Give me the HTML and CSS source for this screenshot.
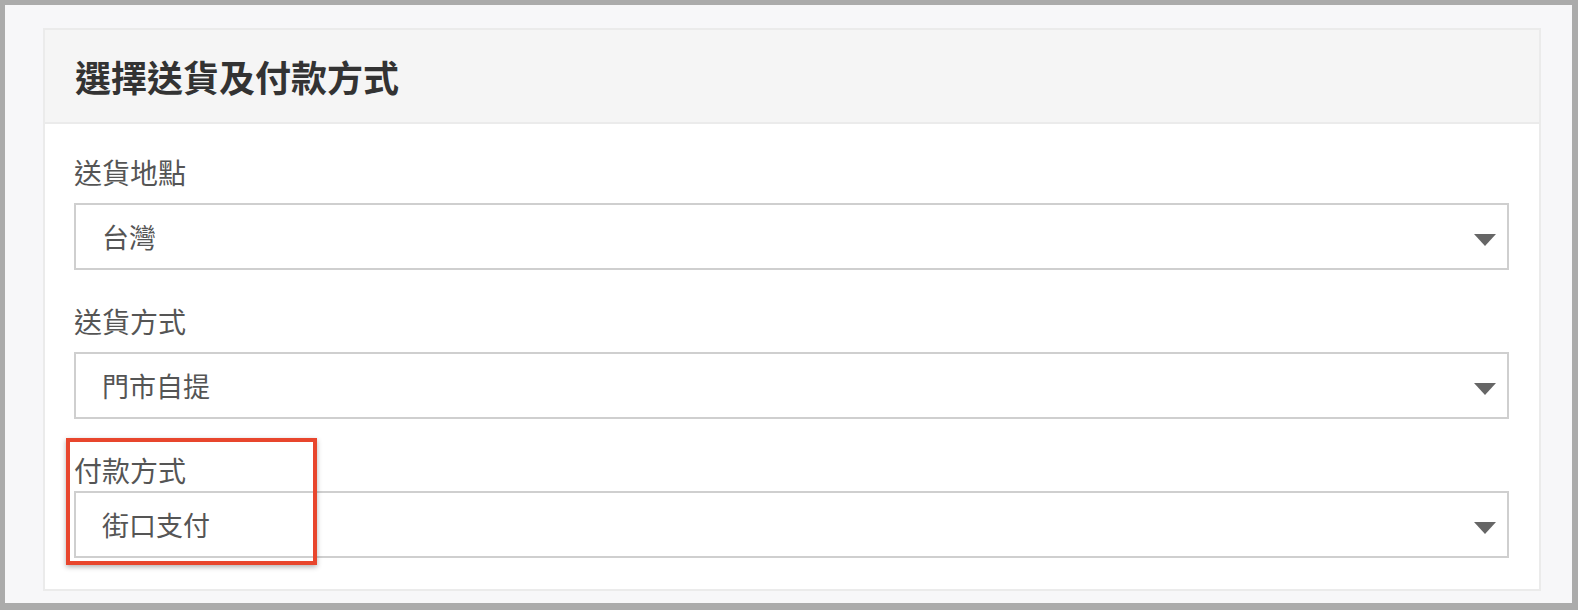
FILE: index.html
```html
<!DOCTYPE html>
<html lang="zh-Hant">
<head>
  <meta charset="UTF-8" />
  <meta name="viewport" content="width=device-width, initial-scale=1.0" />
  <title>選擇送貨及付款方式</title>
  <link rel="stylesheet" href="styles.css">
</head>
<body>
  <div class="page">
    <div class="card">
      <div class="card-header">
        <h2>選擇送貨及付款方式</h2>
      </div>
      <div class="card-body">
        <div class="field">
          <label class="field-label">送貨地點</label>
          <div class="select-box">
            <span class="select-value">台灣</span>
            <span class="select-arrow"></span>
          </div>
        </div>
        <div class="field">
          <label class="field-label">送貨方式</label>
          <div class="select-box">
            <span class="select-value">門市自提</span>
            <span class="select-arrow"></span>
          </div>
        </div>
        <div class="field field-marked">
          <label class="field-label">付款方式</label>
          <div class="select-box">
            <span class="select-value">街口支付</span>
            <span class="select-arrow"></span>
          </div>
          <div class="highlight"></div>
        </div>
      </div>
    </div>
  </div>
</body>
</html>
```

FILE: styles.css
```css
body {
  margin: 0;
  background-color: #ababab;
  padding: 5px 6px 7px 5px;
  font-family: "Noto Sans CJK TC", "Noto Sans", sans-serif;
}
.page {
  height: 598px;
  background-color: #f7f7f9;
  padding: 23px 31px 0 38px;
  box-sizing: border-box;
}
.card {
  background-color: #ffffff;
  border: 2px solid #ebebeb;
}
.card-header {
  height: 92px;
  display: flex;
  align-items: center;
  padding: 0 30px;
  background-color: #f5f5f5;
  border-bottom: 2px solid #ebebeb;
}
.card-header h2 {
  margin: 0;
  font-size: 36px;
  font-weight: 700;
  color: #333;
  line-height: 1;
}
.card-body {
  padding: 28px 30px 31px 29px;
}
.field {
  position: relative;
  margin-bottom: 31px;
}
.field:last-child {
  margin-bottom: 0;
}
.field-label {
  display: block;
  font-size: 28px;
  line-height: 40px;
  color: #555;
  margin-bottom: 11px;
}
.field-marked .field-label {
  margin-bottom: 1px;
}
.select-box {
  height: 67px;
  box-sizing: border-box;
  border: 2px solid #cfcfcf;
  display: flex;
  align-items: center;
  justify-content: space-between;
  padding: 0 11px 0 26px;
}
.select-value {
  font-size: 27px;
  color: #555;
}
.select-arrow {
  width: 0;
  height: 0;
  border-left: 11px solid transparent;
  border-right: 11px solid transparent;
  border-top: 12px solid #666;
  margin-top: 6px;
}
.highlight {
  position: absolute;
  left: -8px;
  top: -12px;
  width: 251px;
  height: 127px;
  box-sizing: border-box;
  border: 4px solid #e8462d;
  box-shadow: 0 2px 5px rgba(0, 0, 0, 0.3);
}
```
